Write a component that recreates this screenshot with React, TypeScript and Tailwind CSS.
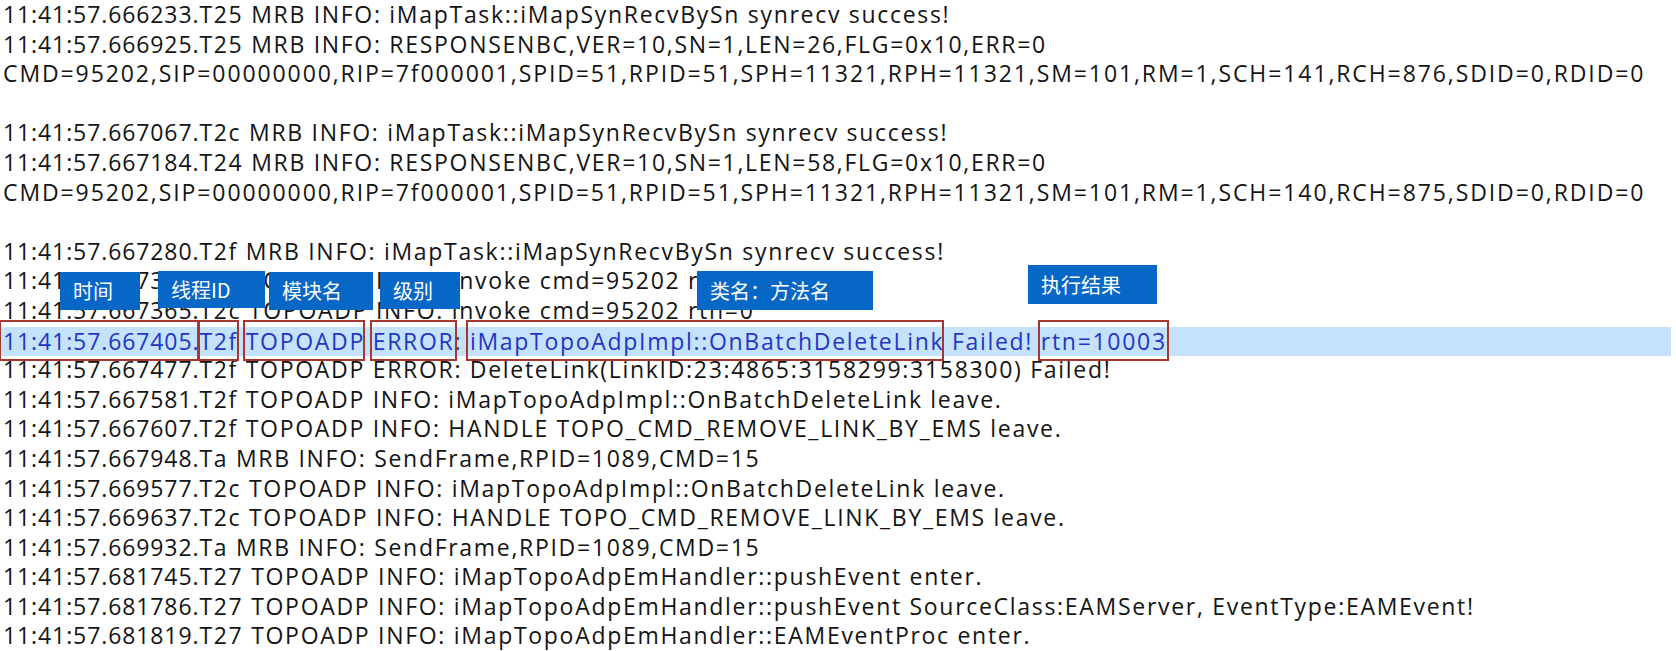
import React from 'react';

const before: string[] = [
  '11:41:57.666233.T25 MRB INFO: iMapTask::iMapSynRecvBySn synrecv success!',
  '11:41:57.666925.T25 MRB INFO: RESPONSENBC,VER=10,SN=1,LEN=26,FLG=0x10,ERR=0',
  'CMD=95202,SIP=00000000,RIP=7f000001,SPID=51,RPID=51,SPH=11321,RPH=11321,SM=101,RM=1,SCH=141,RCH=876,SDID=0,RDID=0',
  '',
  '11:41:57.667067.T2c MRB INFO: iMapTask::iMapSynRecvBySn synrecv success!',
  '11:41:57.667184.T24 MRB INFO: RESPONSENBC,VER=10,SN=1,LEN=58,FLG=0x10,ERR=0',
  'CMD=95202,SIP=00000000,RIP=7f000001,SPID=51,RPID=51,SPH=11321,RPH=11321,SM=101,RM=1,SCH=140,RCH=875,SDID=0,RDID=0',
  '',
  '11:41:57.667280.T2f MRB INFO: iMapTask::iMapSynRecvBySn synrecv success!',
  '11:41:57.667373.T2c TOPOADP INFO: invoke cmd=95202 rtn=0',
  '11:41:57.667365.T2c TOPOADP INFO: invoke cmd=95202 rtn=0',
];

const after: string[] = [
  '11:41:57.667477.T2f TOPOADP ERROR: DeleteLink(LinkID:23:4865:3158299:3158300) Failed!',
  '11:41:57.667581.T2f TOPOADP INFO: iMapTopoAdpImpl::OnBatchDeleteLink leave.',
  '11:41:57.667607.T2f TOPOADP INFO: HANDLE TOPO_CMD_REMOVE_LINK_BY_EMS leave.',
  '11:41:57.667948.Ta MRB INFO: SendFrame,RPID=1089,CMD=15',
  '11:41:57.669577.T2c TOPOADP INFO: iMapTopoAdpImpl::OnBatchDeleteLink leave.',
  '11:41:57.669637.T2c TOPOADP INFO: HANDLE TOPO_CMD_REMOVE_LINK_BY_EMS leave.',
  '11:41:57.669932.Ta MRB INFO: SendFrame,RPID=1089,CMD=15',
  '11:41:57.681745.T27 TOPOADP INFO: iMapTopoAdpEmHandler::pushEvent enter.',
  '11:41:57.681786.T27 TOPOADP INFO: iMapTopoAdpEmHandler::pushEvent SourceClass:EAMServer, EventType:EAMEvent!',
  '11:41:57.681819.T27 TOPOADP INFO: iMapTopoAdpEmHandler::EAMEventProc enter.',
];

// callout labels drawn over the log
const labels = [
  { text: '时间', cls: 'left-[60px] top-[272px] w-[80px] h-[38px]' },
  { text: '线程ID', cls: 'left-[158px] top-[271px] w-[107px] h-[37px]' },
  { text: '模块名', cls: 'left-[269px] top-[272px] w-[104px] h-[38px]' },
  { text: '级别', cls: 'left-[380px] top-[272px] w-[80px] h-[37px]' },
  { text: '类名：方法名', cls: 'left-[697px] top-[271px] w-[176px] h-[39px]' },
  { text: '执行结果', cls: 'left-[1028px] top-[265px] w-[129px] h-[39px]' },
];

const Boxed = ({ children, extra = '' }: { children: React.ReactNode; extra?: string }) => (
  <span className="relative">
    {children}
    <span className={`absolute -top-[5px] -bottom-[4px] border-2 border-[#a3382e] ${extra}`} />
  </span>
);

const Line = ({ text }: { text: string }) => {
  if (!text) return <div className="h-[29.6px]" />;
  if (text.startsWith('CMD=')) return <div className="h-[29.6px] whitespace-pre tracking-[1.9px]">{text}</div>;
  return (
    <div className="h-[29.6px] whitespace-pre">
      <span className="tracking-[0.9px]">{text.slice(0, 16)}</span>
      {text.slice(16)}
    </div>
  );
};

export default function App() {
  return (
    <div className="relative h-[651px] w-[1676px] overflow-hidden bg-white pl-[3px] font-['Open_Sans',sans-serif] text-[23px] leading-[29.6px] tracking-[1.7px] text-[#141414]">
      {before.map((t, i) => (
        <Line key={'b' + i} text={t} />
      ))}

      <div className="-ml-[3px] mt-[1px] h-[29.6px] w-[1671px] whitespace-pre bg-[#c4e2fb] pl-[3px] text-[#1f36c4]">
        <Boxed extra="-left-[4px] right-[0px]">
          <span className="tracking-[0.9px]">11:41:57.667405.</span>
        </Boxed>
        <Boxed extra="-left-[1px] -right-[1px]">T2f</Boxed>{' '}
        <Boxed extra="-left-[3px] right-[0px]">TOPOADP</Boxed>{' '}
        <Boxed extra="-left-[3px] -right-[3px]">ERROR</Boxed>:{' '}
        <Boxed extra="-left-[4px] right-[0px]">iMapTopoAdpImpl::OnBatchDeleteLink</Boxed> Failed!{' '}
        <Boxed extra="-left-[3px] -right-[2px]">rtn=10003</Boxed>
      </div>

      <div className="-mt-[1px]">
        {after.map((t, i) => (
          <Line key={'a' + i} text={t} />
        ))}
      </div>

      {labels.map((l) => (
        <div
          key={l.text}
          className={`absolute flex items-center bg-[#0767c6] pl-[13px] font-['Noto_Sans_CJK_SC',sans-serif] text-[20px] leading-none tracking-normal text-white ${l.cls}`}
        >
          {l.text}
        </div>
      ))}
    </div>
  );
}
